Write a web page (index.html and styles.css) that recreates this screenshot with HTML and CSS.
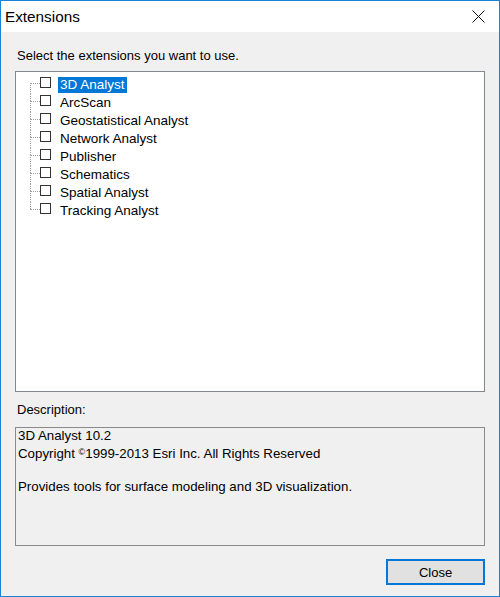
FILE: index.html
```html
<!DOCTYPE html>
<html>
<head>
<meta charset="utf-8">
<link rel="stylesheet" href="styles.css">
</head>
<body>
<div class="window">
  <div class="titlebar">
    <span class="title">Extensions</span>
    <svg class="close-x" width="13" height="13" viewBox="0 0 13 13"><path d="M0.5 0.5 L12.5 12.5 M12.5 0.5 L0.5 12.5" stroke="#111" stroke-width="1" fill="none"/></svg>
  </div>
  <div class="content">
    <div class="label first">Select the extensions you want to use.</div>
    <div class="tree">
      <div class="row first"><span class="conn"><i class="up"></i><i class="down"></i></span><span class="cb"></span><span class="name selected">3D Analyst</span></div>
      <div class="row"><span class="conn"><i class="up"></i><i class="down"></i></span><span class="cb"></span><span class="name">ArcScan</span></div>
      <div class="row"><span class="conn"><i class="up"></i><i class="down"></i></span><span class="cb"></span><span class="name">Geostatistical Analyst</span></div>
      <div class="row"><span class="conn"><i class="up"></i><i class="down"></i></span><span class="cb"></span><span class="name">Network Analyst</span></div>
      <div class="row"><span class="conn"><i class="up"></i><i class="down"></i></span><span class="cb"></span><span class="name">Publisher</span></div>
      <div class="row"><span class="conn"><i class="up"></i><i class="down"></i></span><span class="cb"></span><span class="name">Schematics</span></div>
      <div class="row"><span class="conn"><i class="up"></i><i class="down"></i></span><span class="cb"></span><span class="name">Spatial Analyst</span></div>
      <div class="row last"><span class="conn"><i class="up"></i><i class="down"></i></span><span class="cb"></span><span class="name">Tracking Analyst</span></div>
    </div>
    <div class="label desc-label">Description:</div>
    <div class="desc">
      <div>3D Analyst 10.2</div>
      <div>Copyright <span class="copy">©</span>1999-2013 Esri Inc. All Rights Reserved</div>
      <div>&nbsp;</div>
      <div>Provides tools for surface modeling and 3D visualization.</div>
    </div>
    <div class="buttons">
      <button class="btn">Close</button>
    </div>
  </div>
</div>
</body>
</html>
```
FILE: styles.css
```css
* { box-sizing: border-box; }
html, body { margin: 0; padding: 0; }
body {
  font-family: "Liberation Sans", Arial, sans-serif;
  font-size: 13px;
  color: #000;
  background: #fff;
}
.window {
  width: 500px;
  height: 597px;
  border: 1px solid #1883d7;
  background: #f0f0f0;
  display: flex;
  flex-direction: column;
}
.titlebar {
  height: 31px;
  background: #fff;
  display: flex;
  align-items: center;
  justify-content: space-between;
  padding: 0 14px 0 4px;
}
.title {
  font-size: 15.3px;
  color: #000;
}
.close-x { display: block; }
.content {
  padding: 16px 14px 0 14px;
  display: flex;
  flex-direction: column;
}
.label {
  line-height: 16px;
  height: 16px;
  padding-left: 2px;
  white-space: nowrap;
}
.tree {
  margin-top: 7px;
  height: 321px;
  background: #fff;
  border: 1px solid #828790;
  padding-top: 4px;
}
.row {
  height: 18px;
  display: flex;
  align-items: flex-start;
}
.conn {
  width: 10px;
  height: 18px;
  margin-left: 14px;
  display: flex;
  flex-direction: column;
}
.conn .up {
  height: 7px;
  border-left: 1px dotted #a0a0a0;
}
.conn .down {
  height: 11px;
  border-left: 1px dotted #a0a0a0;
  border-top: 1px dotted #a0a0a0;
}
.row.first .conn .up { border-left: none; }
.row.last .conn .down { border-left: none; }
.cb {
  width: 11px;
  height: 11px;
  margin-top: 1px;
  border: 1px solid #333;
  background: #fff;
}
.name {
  margin-left: 7px;
  margin-top: 1px;
  height: 16px;
  line-height: 15px;
  padding: 0 2px;
  font-size: 13.5px;
  white-space: nowrap;
}
.name.selected {
  background: #0078d7;
  color: #fff;
}
.desc-label {
  margin-top: 10px;
}
.desc {
  margin-top: 9px;
  height: 119px;
  border: 1px solid #8a8a8a;
  background: #f0f0f0;
  padding: 0 2px;
  font-size: 13.3px;
  line-height: 16.2px;
  white-space: nowrap;
}
.copy { font-size: 9px; vertical-align: 3px; }
.buttons {
  margin-top: 13px;
  display: flex;
  justify-content: flex-end;
}
.btn {
  width: 99px;
  height: 26px;
  border: 2px solid #0078d7;
  background: #e1e1e1;
  font-family: "Liberation Sans", Arial, sans-serif;
  font-size: 13px;
  color: #000;
  padding: 0;
}
```
